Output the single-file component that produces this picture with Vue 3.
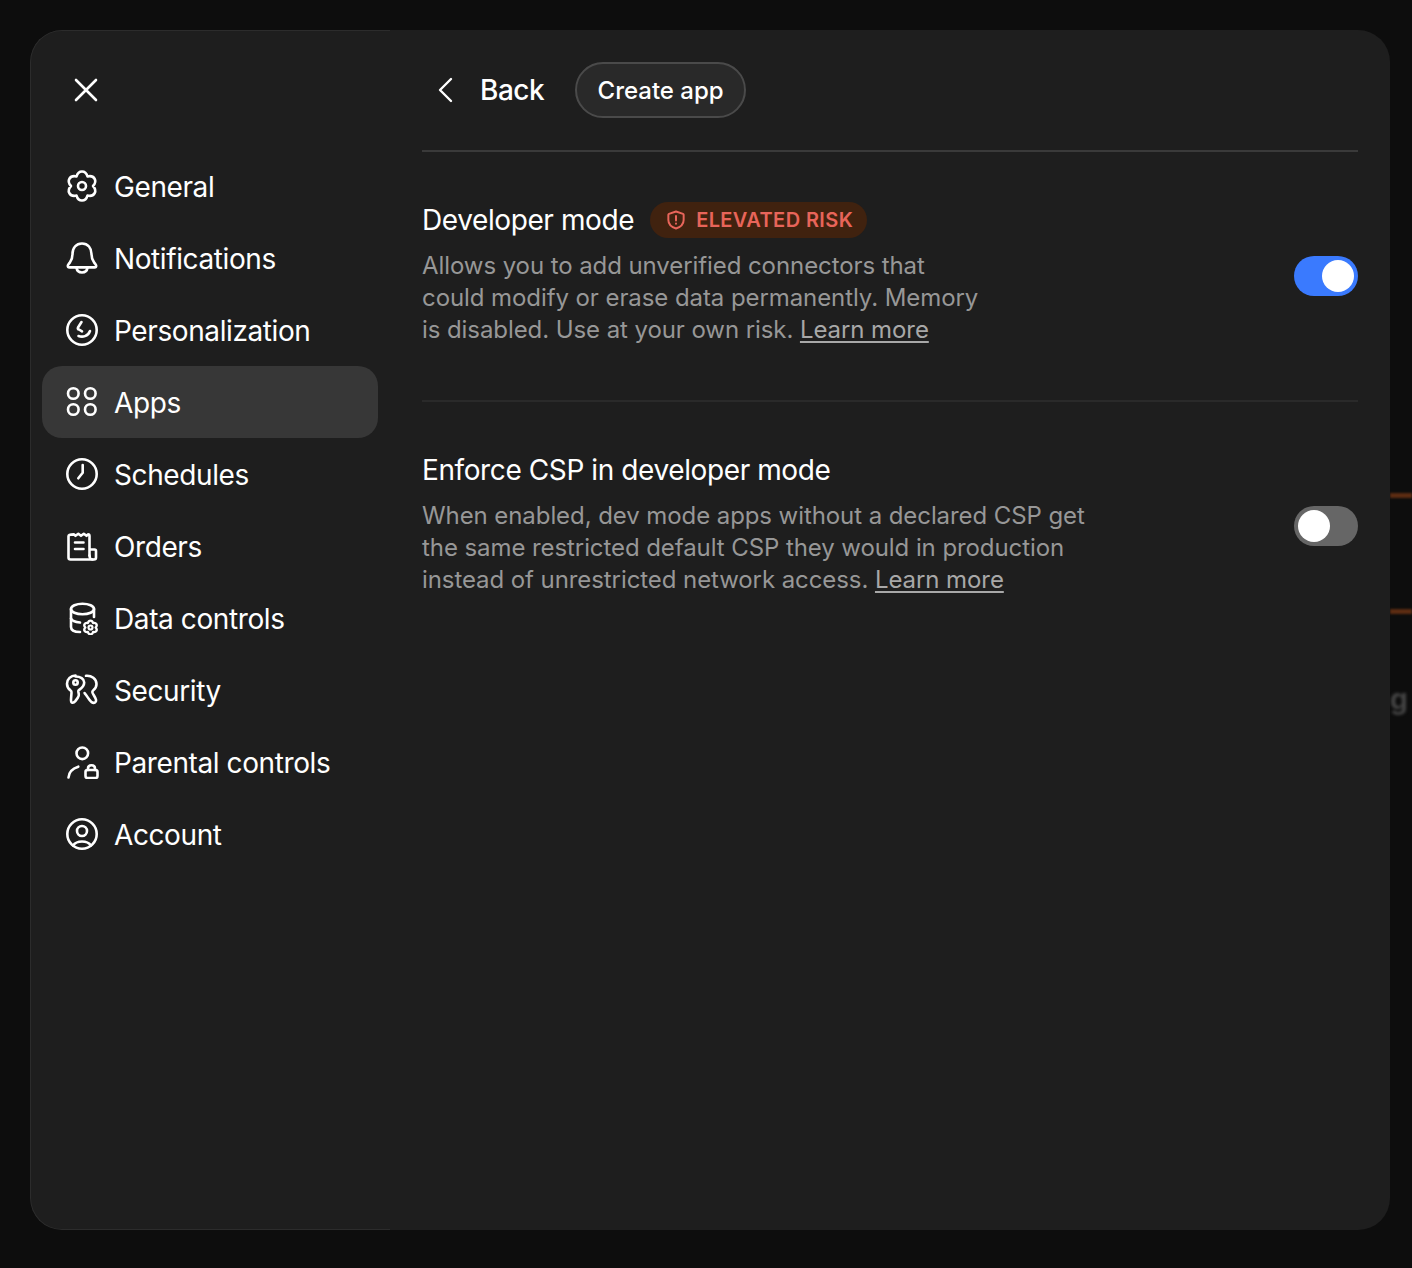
<script setup>
const navItems = [
  { label: "General", icon: "general" },
  { label: "Notifications", icon: "bell" },
  { label: "Personalization", icon: "person" },
  { label: "Apps", icon: "apps", active: true },
  { label: "Schedules", icon: "clock" },
  { label: "Orders", icon: "orders" },
  { label: "Data controls", icon: "data" },
  { label: "Security", icon: "security" },
  { label: "Parental controls", icon: "parental" },
  { label: "Account", icon: "account" },
];

// six lobed gear, used by General and (scaled down) by Data controls
const gear =
  "M11.5 7.47C13.5.8 20.5.8 22.5 7.47C29.28 5.87 32.78 11.93 28 17C32.78 22.07 29.28 28.13 22.5 26.53C20.5 33.2 13.5 33.2 11.5 26.53C4.72 28.13 1.22 22.07 6 17C1.22 11.93 4.72 5.87 11.5 7.47Z";
</script>

<template>
  <div class="page">
    <div class="backdrop">
      <span class="streak streak-one"></span>
      <span class="streak streak-two"></span>
      <span class="ghost-letter">g</span>
    </div>
    <div class="dialog">
      <aside class="sidebar">
        <button class="close" aria-label="Close">
          <svg width="28" height="28" viewBox="0 0 28 28" fill="none" stroke="#fff" stroke-width="2.6" stroke-linecap="round">
            <path d="M4 4 24 24M24 4 4 24" />
          </svg>
        </button>
        <nav class="nav">
          <div v-for="item in navItems" :key="item.label" class="nav-item" :class="{ active: item.active }">
            <svg class="nav-icon" width="34" height="34" viewBox="0 0 34 34" fill="none" stroke="#fff" stroke-width="2.6" stroke-linecap="round" stroke-linejoin="round">
              <template v-if="item.icon === 'general'">
                <path :d="gear" />
                <circle cx="17" cy="17" r="4" />
              </template>
              <template v-else-if="item.icon === 'bell'">
                <path d="M17 2.5C11 2.5 7.5 7 7.5 13c0 3.400-.7 5.800-2.500 8.300-1 1.500-2.200 2.400-2.200 3.500 0 1 .7 1.600 1.700 1.600h25c1 0 1.700-.6 1.700-1.600 0-1.100-1.200-2-2.200-3.500-1.800-2.500-2.500-4.900-2.500-8.300C26.500 7 23 2.500 17 2.500Z" />
                <path d="M11.500 26.800c.4 2.800 2.700 4.700 5.500 4.700s5.100-1.900 5.500-4.700" />
              </template>
              <template v-else-if="item.icon === 'person'">
                <circle cx="17" cy="17" r="14.700" />
                <path d="M16.500 9 13 14.500c-.5 1 0 1.800 1 2l3 1.800" />
                <path d="M13.500 23c4 1.500 9.500.5 11.500-5" />
              </template>
              <template v-else-if="item.icon === 'apps'">
                <circle cx="8.300" cy="8.500" r="5.300" />
                <circle cx="25.300" cy="8.500" r="5.300" />
                <circle cx="8.300" cy="24.500" r="5.300" />
                <circle cx="25.300" cy="24.500" r="5.300" />
              </template>
              <template v-else-if="item.icon === 'clock'">
                <circle cx="17" cy="17" r="14.700" />
                <path d="M17.700 8V15.700L13.300 21.300" />
              </template>
              <template v-else-if="item.icon === 'orders'">
                <path d="M24.500 26.500V7c0-.9-.6-1.600-1.500-1.600l-1.500 1.400-2.700-2-2.800 2-2.700-2-2.800 2-1.500-1.400C4.600 5.400 3.500 6 3.500 7.200V28.500c0 1.100.8 2 2 2H29c1.100 0 2-.9 2-2v-6.500c0-.8-.6-1.500-1.500-1.500h-5" />
                <path d="M24.500 26.500c0 2.200 1.200 4 3 4" />
                <path d="M10 13.500h8.500M10 20h8.500" />
              </template>
              <template v-else-if="item.icon === 'data'">
                <ellipse cx="17.500" cy="8" rx="11.500" ry="5.300" />
                <path d="M6 8V26c0 3 3 5 9 5" />
                <path d="M29 8V16" />
                <path d="M6 17.500c1 2.300 4 3.500 9 4" />
                <path :d="gear" transform="translate(17.500 18.500) scale(.47)" stroke-width="5" />
                <circle cx="25.500" cy="26.500" r="2" stroke-width="2.200" />
              </template>
              <template v-else-if="item.icon === 'security'">
                <path d="M10.500 2.500C5.800 2.500 2 6.200 2 10.800c0 2.800 1.300 5.100 3.500 6.600.8.500 1.100 1.200 1 2.200l-.5 6.800c-.1 1.600-.1 3 1.300 3.300 1.300.3 2.200-.6 3-1.600l2.400-3.200c.9-1.200 1.300-2.300 1.100-3.600l-.5-2.800c-.1-.7.200-1.100.9-1.600 2.200-1.500 5-3.800 5-7.300 0-3.700-3.700-6.100-8.700-6.100Z" />
                <circle cx="10.500" cy="9.500" r="2.200" />
                <path d="M21 2.800c5.500-.5 10.500 3 10.500 8.200 0 2.700-1.300 4.800-3.200 6.200-.9.700-1.200 1.300-.9 2.300.5 1.800 3.100 4.900 3.600 7.200.3 1.600-.6 3.200-2.300 3.200-2.300 0-3.800-2.500-5.100-4.300-1-1.400-2.100-3.200-4-5.500" />
              </template>
              <template v-else-if="item.icon === 'parental'">
                <circle cx="17.300" cy="8.300" r="5.800" />
                <path d="M3.500 32.500c.3-4.700 4-9 9.800-10.800" />
                <rect x="20.500" y="25" width="12" height="8" rx="2" />
                <path d="M23 25v-1.500c0-2 1.500-3.300 3.500-3.300s3.500 1.300 3.500 3.300V25" />
              </template>
              <template v-else-if="item.icon === 'account'">
                <circle cx="17" cy="17" r="14.700" />
                <circle cx="17" cy="14" r="5" />
                <path d="M8 28.500c2-2.800 5-4 9-4s7 1.200 9 4" />
              </template>
            </svg>
            <span class="nav-label">{{ item.label }}</span>
          </div>
        </nav>
      </aside>

      <main class="content">
        <header class="top-bar">
          <button class="back">
            <svg width="20" height="28" viewBox="0 0 20 28" fill="none" stroke="#fff" stroke-width="2.4" stroke-linecap="round" stroke-linejoin="round">
              <path d="M15 3 4 14 15 25" />
            </svg>
            <span>Back</span>
          </button>
          <button class="create">Create app</button>
        </header>

        <section class="setting first">
          <div class="setting-text">
            <div class="title-row">
              <h2 class="setting-title">Developer mode</h2>
              <span class="risk">
                <svg width="18" height="20" viewBox="0 0 20 22" fill="none" stroke="#e8655a" stroke-width="2.2" stroke-linejoin="round" stroke-linecap="round">
                  <path d="M10 1.500 17.800 4.200c.5.200.7.500.7 1V11c0 4.400-3.500 7.800-8.500 9.500C5 18.800 1.500 15.400 1.500 11V5.200c0-.5.200-.8.700-1L10 1.500Z" />
                  <path d="M10 6.500V11.500M10 15V15.100" />
                </svg>
                ELEVATED RISK
              </span>
            </div>
            <p class="setting-desc dev-desc">
              Allows you to add unverified connectors that could modify or erase data permanently. Memory is disabled. Use at your own risk.
              <a class="learn">Learn more</a>
            </p>
          </div>
          <div class="toggle on"><span class="knob"></span></div>
        </section>

        <section class="setting">
          <div class="setting-text">
            <div class="title-row">
              <h2 class="setting-title">Enforce CSP in developer mode</h2>
            </div>
            <p class="setting-desc csp-desc">
              When enabled, dev mode apps without a declared CSP get the same restricted default CSP they would in production instead of unrestricted network access.
              <a class="learn">Learn more</a>
            </p>
          </div>
          <div class="toggle"><span class="knob"></span></div>
        </section>
      </main>
    </div>
  </div>
</template>

<style>
html,
body {
  margin: 0;
  background: #0d0d0d;
}
</style>

<style scoped>
.page {
  position: relative;
  height: 1268px;
  padding: 30px 22px 38px 30px;
  box-sizing: border-box;
  background: #0d0d0d;
  overflow: hidden;
  font-family: Inter, "Liberation Sans", sans-serif;
}

.backdrop {
  position: absolute;
  inset: 0;
  pointer-events: none;
}

.streak {
  position: absolute;
  left: 1390px;
  width: 22px;
  height: 5px;
  background: #5c2c12;
  filter: blur(1px);
}

.streak-one {
  top: 493px;
}

.streak-two {
  top: 609px;
}

.ghost-letter {
  position: absolute;
  left: 1390px;
  top: 682px;
  color: #444;
  font-size: 28px;
  font-weight: 700;
  filter: blur(1.5px);
}

.dialog {
  position: relative;
  display: flex;
  height: 1200px;
  border-radius: 32px;
  background: #1e1e1e;
  overflow: hidden;
}

.sidebar {
  width: 360px;
  flex: none;
  box-sizing: border-box;
  padding: 0 12px 0 11px;
  border: 1px solid #2c2c2c;
  border-right: none;
  border-radius: 32px 0 0 32px;
}

.close {
  display: block;
  margin: 45px 0 0 30px;
  padding: 0;
  width: 28px;
  height: 28px;
  border: none;
  background: none;
}

.nav {
  margin-top: 46px;
}

.nav-item {
  display: flex;
  align-items: center;
  height: 72px;
  padding-left: 23px;
  border-radius: 20px;
}

.nav-item.active {
  background: #373737;
}

.nav-icon {
  flex: none;
}

.nav-label {
  margin: 2px 0 0 15px;
  color: #fff;
  font-size: 28px;
  line-height: 36px;
  letter-spacing: -0.4px;
}

.content {
  flex: 1;
  min-width: 0;
  padding: 0 32px;
}

.top-bar {
  display: flex;
  align-items: center;
  height: 120px;
  border-bottom: 2px solid #3a3a3a;
}

.back {
  display: flex;
  align-items: center;
  gap: 24px;
  margin-left: 14px;
  padding: 0;
  border: none;
  background: none;
  color: #fff;
  font: inherit;
  font-size: 28px;
  font-weight: 500;
  letter-spacing: -0.5px;
}

.create {
  margin-left: 31px;
  width: 171px;
  height: 56px;
  padding: 0;
  box-sizing: border-box;
  border: 2px solid #4a4a4a;
  border-radius: 28px;
  background: #292929;
  color: #fff;
  font: inherit;
  font-size: 24px;
  font-weight: 500;
}

.setting {
  display: flex;
  justify-content: space-between;
  align-items: flex-start;
  height: 250px;
  box-sizing: border-box;
  padding-top: 50px;
}

.setting.first {
  border-bottom: 2px solid #2a2a2a;
}

.setting-text {
  min-width: 0;
}

.title-row {
  display: flex;
  align-items: center;
  height: 36px;
}

.setting-title {
  margin: 0;
  color: #fff;
  font-size: 28px;
  font-weight: 400;
  line-height: 36px;
  letter-spacing: -0.4px;
}

.risk {
  display: flex;
  align-items: center;
  gap: 11px;
  height: 36px;
  margin-left: 16px;
  padding: 0 14px 0 17px;
  border-radius: 18px;
  background: #40220f;
  color: #e8655a;
  font-size: 20px;
  font-weight: 600;
  letter-spacing: 0.4px;
}

.setting-desc {
  margin: 12px 0 0;
  color: #979797;
  font-size: 24px;
  line-height: 32px;
  letter-spacing: -0.08px;
}

.dev-desc {
  width: 560px;
}

.csp-desc {
  width: 680px;
}

.learn {
  color: #a8a8a8;
  text-decoration: underline;
  text-underline-offset: 3px;
}

.toggle {
  flex: none;
  display: flex;
  align-items: center;
  width: 64px;
  height: 40px;
  margin-top: 54px;
  padding: 4px;
  box-sizing: border-box;
  border-radius: 20px;
  background: #666;
}

.toggle.on {
  justify-content: flex-end;
  background: #3a7afe;
}

.knob {
  width: 32px;
  height: 32px;
  border-radius: 50%;
  background: #fff;
}
</style>
